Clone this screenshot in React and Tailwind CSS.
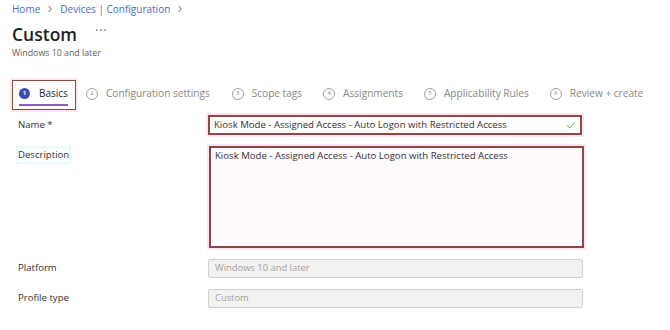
import React from 'react';

const steps = [
  { n: 2, label: 'Configuration settings', ml: 'ml-[10px]' },
  { n: 3, label: 'Scope tags', ml: 'ml-[22px]' },
  { n: 4, label: 'Assignments', ml: 'ml-[21px]' },
  { n: 5, label: 'Applicability Rules', ml: 'ml-[21px]' },
  { n: 6, label: 'Review + create', ml: 'ml-[21px]' },
];

const Chevron = () => (
  <svg width="8" height="8" viewBox="0 0 8 8" className="mx-[6px]">
    <path d="M2.5 1 L5.5 4 L2.5 7" fill="none" stroke="#6b6b6b" strokeWidth="1" />
  </svg>
);

const Label = ({ children }) => (
  <div className="w-[196px] shrink-0 pl-[18px] text-[9.6px] text-[#323130]">{children}</div>
);

const App = () => {
  return (
    <div
      className="w-[670px] h-[330px] bg-white overflow-hidden"
      style={{ fontFamily: '"Open Sans", "Noto Sans", sans-serif' }}
    >
      {/* ── Header ── */}
      <div className="pl-[12px] pt-[1px]">
        <div className="flex items-center text-[10px] text-[#4f6bbd] leading-[16px]">
          <span>Home</span>
          <Chevron />
          <span>Devices | Configuration</span>
          <Chevron />
        </div>
        <div className="flex items-center mt-[5px] h-[24px]">
          <h1 className="text-[17.5px] font-semibold text-[#201f1e] leading-[24px]">Custom</h1>
          <span className="ml-[18px] text-[12px] text-[#605e5c] tracking-[1px] -mt-[6px]">···</span>
        </div>
        <p className="text-[8.8px] text-[#605e5c] leading-[12px] mt-[1px]">Windows 10 and later</p>
      </div>

      {/* ── Wizard steps ── */}
      <div className="flex items-center mt-[21px] h-[30px]">
        <div className="ml-[12px] w-[64px] h-[30px] border border-[#8a4b3f] shadow-[0_0_0_2px_#fde8f3] flex flex-col justify-center">
          <div className="flex items-center pl-[6px] mt-[2px]">
            <span className="w-[11px] h-[11px] rounded-full bg-[#3b4db3] text-white text-[6px] font-bold flex items-center justify-center">1</span>
            <span className="ml-[9px] text-[10px] text-[#201f1e]">Basics</span>
          </div>
          <div className="ml-[6px] mt-[3px] w-[49px] h-[2px] bg-[#8a5cc8]" />
        </div>
        {steps.map((s) => (
          <div key={s.n} className={`flex items-center ${s.ml} -mt-[2px]`}>
            <span className="w-[12px] h-[12px] rounded-full border border-[#a19f9d] text-[6px] text-[#8a8886] flex items-center justify-center">
              {s.n}
            </span>
            <span className="ml-[8px] text-[10.1px] text-[#8a8886] whitespace-nowrap">{s.label}</span>
          </div>
        ))}
      </div>

      {/* ── Form ── */}
      <div className="mt-[5px] flex flex-col">
        <div className="flex items-center h-[20px]">
          <Label>Name *</Label>
          <div className="ml-[12px] w-[374px] h-[20px] border-2 border-[#8e4745] shadow-[0_0_0_2px_#fde6f4] flex items-center justify-between px-[4px]">
            <span className="text-[9.6px] text-[#323130] whitespace-nowrap">
              Kiosk Mode - Assigned Access - Auto Logon with Restricted Access
            </span>
            <svg width="10" height="8" viewBox="0 0 10 8">
              <path d="M1 4.2 L3.8 7 L9 1" fill="none" stroke="#6fae5a" strokeWidth="1" />
            </svg>
          </div>
        </div>

        <div className="flex items-start mt-[11px]">
          <Label>
            <span className="inline-block mt-[2px] leading-[14px] shadow-[0_0_0_2px_#e6fbfd]">Description</span>
          </Label>
          <div className="ml-[13px] w-[375px] h-[102px] border-2 border-[#8e4745] bg-[#fffafd] shadow-[0_0_0_2px_#fde6f4] px-[4px] pt-[1px] text-[9.6px] leading-[14px] text-[#323130]">
            <span className="whitespace-nowrap">
              Kiosk Mode - Assigned Access - Auto Logon with Restricted Access
            </span>
          </div>
        </div>

        <div className="flex items-center mt-[11px] h-[19px]">
          <Label>Platform</Label>
          <div className="ml-[12px] w-[375px] h-[19px] border border-[#d2d0ce] bg-[#f3f2f1] rounded-[2px] flex items-center px-[6px]">
            <span className="text-[9.4px] text-[#a19f9d]">Windows 10 and later</span>
          </div>
        </div>

        <div className="flex items-center mt-[11px] h-[19px]">
          <Label>Profile type</Label>
          <div className="ml-[12px] w-[375px] h-[19px] border border-[#d2d0ce] bg-[#f3f2f1] rounded-[2px] flex items-center px-[6px]">
            <span className="text-[9.4px] text-[#a19f9d]">Custom</span>
          </div>
        </div>
      </div>
    </div>
  );
};

export default App;
